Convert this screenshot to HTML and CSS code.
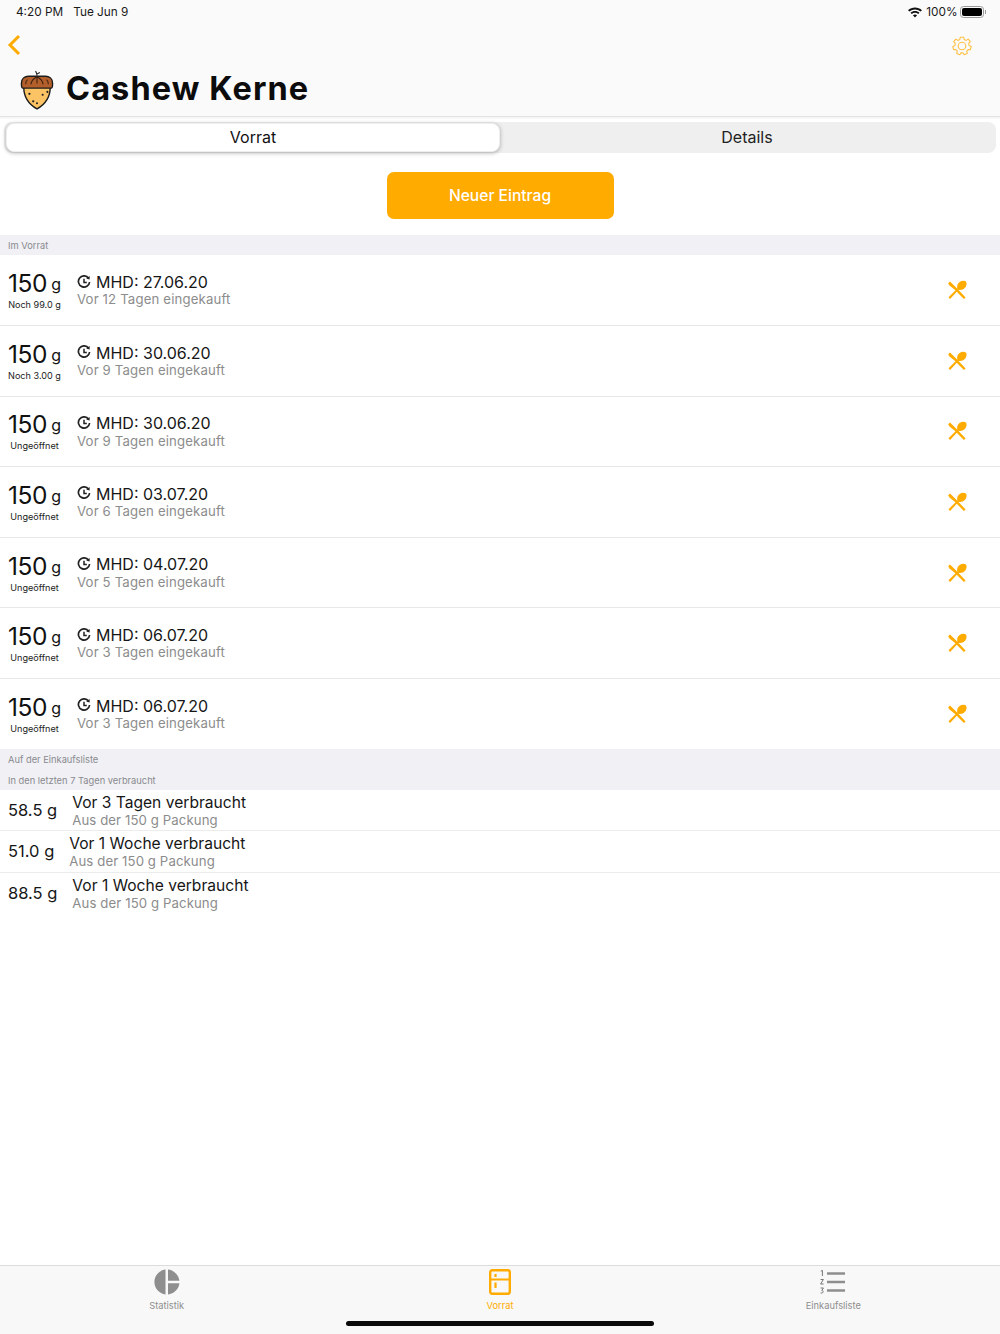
FILE: index.html
```html
<!DOCTYPE html>
<html lang="de">
<head>
<meta charset="utf-8">
<title>Cashew Kerne</title>
<link rel="stylesheet" href="styles.css">
</head>
<body>
<svg class="defs" width="0" height="0" aria-hidden="true">
  <symbol id="cutlery" viewBox="0 0 20 20">
    <path d="M1.200 3.200 3 1.400 9.600 8 18.600 17.400 16.900 19 7.800 9.800 2.400 5.600Z" fill="#ffab00"/>
    <path d="M1.500 17.300 10.400 8.600C9.600 6 10.600 3.300 12.600 1.900 14.700.5 17.600.4 18.900 1.600 20.100 3 19.600 5.800 18 7.800 16.200 9.800 13.600 10.500 11.600 9.800L3.100 19Z" fill="#ffab00"/>
  </symbol>
  <symbol id="clock" viewBox="0 0 14 14">
    <path d="M11.600 3.200A5.600 5.600 0 1 0 12.600 7" fill="none" stroke="#222" stroke-width="1.700"/>
    <path d="M9.200 3.600 12.600 4.400 12.600 1Z" fill="#222"/>
    <path d="M7 3.800V7.400H9.800" fill="none" stroke="#222" stroke-width="1.500"/>
  </symbol>
</svg>
<div class="page">
  <header class="head">
    <div class="status">
      <span class="time">4:20 PM</span><span class="date">Tue Jun 9</span>
      <span class="spacer"></span>
      <svg class="wifi" width="14" height="11" viewBox="0 0 14 11"><path d="M7 10.600 4.900 8.300C6.100 7.200 7.900 7.200 9.100 8.300Z M3.800 7.100 2.500 5.700C5 3.400 9 3.400 11.500 5.700L10.200 7.100C8.400 5.400 5.600 5.400 3.800 7.100Z M1.500 4.600 0 3.200C3.900-.5 10.100-.5 14 3.200L12.500 4.600C9.400 1.700 4.600 1.700 1.500 4.600Z" fill="#111"/></svg>
      <span class="pct">100%</span>
      <span class="battery"><span class="cell"></span></span><span class="nub"></span>
    </div>
    <div class="navrow">
      <svg class="back" width="14" height="22" viewBox="0 0 14 22"><path d="M12 2 3 11 12 20" fill="none" stroke="#ffab00" stroke-width="3"/></svg>
      <svg class="gear" width="20" height="20" viewBox="0 0 20 20"><path d="M8.300 1.200H11.700L12.200 3.500 14.200 4.400 16.200 3.100 18.300 5.700 16.700 7.400 17.100 9.500 19.200 10.500 18.400 13.600 16.100 13.500 14.700 15.200 15.300 17.400 12.200 18.800 11 16.900H9L7.800 18.800 4.700 17.400 5.300 15.200 3.900 13.500 1.600 13.600.8 10.500 2.900 9.500 3.300 7.400 1.700 5.700 3.800 3.100 5.800 4.400 7.800 3.500Z" fill="none" stroke="#ffc144" stroke-width="1.100" stroke-linejoin="round"/><circle cx="10" cy="10" r="3.800" fill="none" stroke="#ffc144" stroke-width="1.100"/></svg>
    </div>
    <div class="titlerow">
      <svg class="nut" width="34" height="42" viewBox="0 0 36 42">
        <path d="M18 6C18 4 17.500 3 16.500 1M18 4 21 2.500" fill="none" stroke="#222" stroke-width="1.200"/>
        <path d="M4 18C4 31 11 37 18 41 25 37 32 31 32 18Z" fill="#fbc364" stroke="#1c1c1c" stroke-width="1.500"/>
        <path d="M3 19C1.500 19 1.500 17 1.500 14 1.500 9 5 6.500 9 6.500H27C31 6.500 34.500 9 34.500 14 34.500 17 34.500 19 33 19Z" fill="#b25f2c" stroke="#1c1c1c" stroke-width="1.500"/>
        <path d="M18 7C14 9 12 12 11.500 15M18 7C22 9 24 12 24.500 15M18 7V14M8 10C6.500 11 6 13 6 15M28 10C29.500 11 30 13 30 15" fill="none" stroke="#3b2010" stroke-width="1.100"/>
        <circle cx="10" cy="25" r="1.200" fill="#222"/><circle cx="24" cy="26" r="1.100" fill="#222"/><circle cx="29" cy="23" r="1.100" fill="#222"/><circle cx="14" cy="33" r="1.200" fill="#222"/><circle cx="18" cy="35" r="1.100" fill="#222"/>
      </svg>
      <h1 class="title">Cashew Kerne</h1>
    </div>
  </header>
  <div class="segbar">
    <div class="segs">
      <div class="seg active">Vorrat</div>
      <div class="seg">Details</div>
    </div>
  </div>
  <div class="action"><button class="cta">Neuer Eintrag</button></div>
  <main class="content">
    <div class="sec sec-first">Im Vorrat</div>
    <ul class="stock">
      <li class="item"><div class="amt"><div class="big">150<small> g</small></div><div class="sub">Noch 99.0 g</div></div><div class="info"><div class="mhd"><svg class="clk"><use href="#clock"/></svg>MHD: 27.06.20</div><div class="grey">Vor 12 Tagen eingekauft</div></div><svg class="eat"><use href="#cutlery"/></svg></li>
      <li class="item"><div class="amt"><div class="big">150<small> g</small></div><div class="sub">Noch 3.00 g</div></div><div class="info"><div class="mhd"><svg class="clk"><use href="#clock"/></svg>MHD: 30.06.20</div><div class="grey">Vor 9 Tagen eingekauft</div></div><svg class="eat"><use href="#cutlery"/></svg></li>
      <li class="item"><div class="amt"><div class="big">150<small> g</small></div><div class="sub">Ungeöffnet</div></div><div class="info"><div class="mhd"><svg class="clk"><use href="#clock"/></svg>MHD: 30.06.20</div><div class="grey">Vor 9 Tagen eingekauft</div></div><svg class="eat"><use href="#cutlery"/></svg></li>
      <li class="item"><div class="amt"><div class="big">150<small> g</small></div><div class="sub">Ungeöffnet</div></div><div class="info"><div class="mhd"><svg class="clk"><use href="#clock"/></svg>MHD: 03.07.20</div><div class="grey">Vor 6 Tagen eingekauft</div></div><svg class="eat"><use href="#cutlery"/></svg></li>
      <li class="item"><div class="amt"><div class="big">150<small> g</small></div><div class="sub">Ungeöffnet</div></div><div class="info"><div class="mhd"><svg class="clk"><use href="#clock"/></svg>MHD: 04.07.20</div><div class="grey">Vor 5 Tagen eingekauft</div></div><svg class="eat"><use href="#cutlery"/></svg></li>
      <li class="item"><div class="amt"><div class="big">150<small> g</small></div><div class="sub">Ungeöffnet</div></div><div class="info"><div class="mhd"><svg class="clk"><use href="#clock"/></svg>MHD: 06.07.20</div><div class="grey">Vor 3 Tagen eingekauft</div></div><svg class="eat"><use href="#cutlery"/></svg></li>
      <li class="item"><div class="amt"><div class="big">150<small> g</small></div><div class="sub">Ungeöffnet</div></div><div class="info"><div class="mhd"><svg class="clk"><use href="#clock"/></svg>MHD: 06.07.20</div><div class="grey">Vor 3 Tagen eingekauft</div></div><svg class="eat"><use href="#cutlery"/></svg></li>
    </ul>
    <div class="sec">Auf der Einkaufsliste</div>
    <div class="sec">In den letzten 7 Tagen verbraucht</div>
    <ul class="used">
      <li class="urow"><div class="uamt">58.5 g</div><div class="utext"><div class="utitle">Vor 3 Tagen verbraucht</div><div class="ugrey">Aus der 150 g Packung</div></div></li>
      <li class="urow"><div class="uamt">51.0 g</div><div class="utext"><div class="utitle">Vor 1 Woche verbraucht</div><div class="ugrey">Aus der 150 g Packung</div></div></li>
      <li class="urow"><div class="uamt">88.5 g</div><div class="utext"><div class="utitle">Vor 1 Woche verbraucht</div><div class="ugrey">Aus der 150 g Packung</div></div></li>
    </ul>
  </main>
  <nav class="tabs">
    <div class="tab">
      <svg width="26" height="26" viewBox="0 0 26 26"><path d="M11.500.6V25.400C5.200 24.700.4 19.400.4 13S5.200 1.300 11.500.6Z M14 .6C19.900 1.200 24.800 5.900 25.400 11.800H14Z M14 14.200H25.400C24.800 20.100 19.900 24.800 14 25.400Z" fill="#8e8e8e"/></svg>
      <span>Statistik</span>
    </div>
    <div class="tab on">
      <svg width="22" height="26" viewBox="0 0 22 26"><rect x="1.200" y="1.200" width="19.600" height="23.600" rx="2" fill="none" stroke="#ffab00" stroke-width="2.400"/><path d="M1.500 10.500H20.500M6.500 5V8M6.500 13.500V19" stroke="#ffab00" stroke-width="2.200" fill="none"/></svg>
      <span>Vorrat</span>
    </div>
    <div class="tab">
      <svg width="26" height="26" viewBox="0 0 26 26"><path d="M7 4.500H25M7 13H25M7 21.500H25" stroke="#8e8e8e" stroke-width="2.400" fill="none"/><path d="M.8 2.200 2.400 1.400V7M.6 10.500H3.400L.6 15H3.600M.6 19H3.400L1.800 21.500C3.800 21.500 3.800 24.500.6 24" stroke="#777" stroke-width="1" fill="none"/></svg>
      <span>Einkaufsliste</span>
    </div>
    <div class="homebar"></div>
  </nav>
</div>
</body>
</html>
```
FILE: styles.css
```css
* { box-sizing: border-box; }
html, body { margin: 0; padding: 0; }
body { font-family: Inter, "Liberation Sans", sans-serif; color: #111; background: #fff; }
.defs { position: absolute; }
ul { list-style: none; margin: 0; padding: 0; }
.page { width: 1000px; height: 1334px; display: flex; flex-direction: column; overflow: hidden; }

.head { height: 117px; background: #fafafa; border-bottom: 1px solid #e2e2e2; box-shadow: 0 2px 0 #f7f7f7; flex: none; }
.status { height: 24px; display: flex; align-items: center; padding: 0 14px 0 16px; font-size: 11.800px; color: #1a1a1a; }
.date { margin-left: 10px; }
.spacer { flex: 1; }
.wifi { margin-right: 4px; }
.pct { margin-right: 2px; }
.battery { width: 24px; height: 12px; border: 1px solid #999; border-radius: 3.500px; padding: 1px; display: block; }
.cell { display: block; height: 100%; background: #000; border-radius: 2px; }
.nub { width: 1.500px; height: 4px; background: #999; margin-left: 1px; }

.navrow { height: 42px; display: flex; justify-content: space-between; align-items: center; padding: 0 28px 0 7px; }
.gear { margin-top: 2px; }
.titlerow { display: flex; align-items: center; padding: 0 0 6px 20px; gap: 12px; height: 50px; }
.nut { margin-top: 3px; }
.title { margin: 0; font-size: 32.500px; font-weight: 700; letter-spacing: 1.100px; color: #0c0c0c; padding-top: 1px; }

.segbar { padding: 5px 4px 0 4px; flex: none; }
.segs { height: 31px; background: #efefef; border-radius: 8px; display: flex; }
.seg { flex: 1; display: flex; align-items: center; justify-content: center; font-size: 16px; color: #222; padding: 0 2px 2px 0; }
.seg.active { background: #fff; border-radius: 8px; margin: 1px 0 1px 2px; border: 1px solid #eee; box-shadow: 0 1px 4px rgba(0,0,0,.3); color: #111; flex: none; width: 494px; padding: 0 0 1px; }

.action { display: flex; justify-content: center; padding: 19px 0 16px; flex: none; }
.cta { width: 227px; height: 47px; border: 0; border-radius: 7px; background: #ffab00; color: #fff; font: 500 15.600px Inter, "Liberation Sans", sans-serif; padding: 0 0 1px; }

.content { flex: 1; min-height: 0; }
.sec { height: 20.500px; background: #f0f0f5; color: #8a8a8e; font-size: 9.300px; padding: 1px 0 0 8px; display: flex; align-items: center; }
.sec-first { height: 20.400px; }

.item { height: 70.600px; display: flex; align-items: center; border-bottom: 1px solid #e8e8e8; padding: 0 33px 0 8px; }
.item:last-child { border-bottom: 0; height: 70px; }
.amt { width: 69px; flex: none; display: flex; flex-direction: column; align-items: center; padding-right: 16px; }
.big { font-size: 24.500px; letter-spacing: -.4px; line-height: 28px; white-space: nowrap; }
.big small { display: inline-block; font-size: 16px; letter-spacing: 0; margin-left: 4px; transform: translateY(-2px); }
.sub { font-size: 9.100px; line-height: 13px; margin-top: -2px; white-space: nowrap; color: #222; }
.info { flex: 1; margin-top: 1px; }
.mhd { display: flex; align-items: center; font-size: 16px; line-height: 18.500px; color: #161616; }
.clk { width: 14px; height: 14px; margin-right: 5px; margin-top: -1px; }
.grey { font-size: 13.200px; line-height: 17px; color: #8c8c8c; letter-spacing: .15px; }
.eat { width: 20px; height: 20px; flex: none; }

.urow { height: 41.300px; display: flex; align-items: center; gap: 15px; padding-left: 8px; border-bottom: 1px solid #ececec; }
.urow:last-child { border-bottom: 0; }
.uamt { font-size: 16.500px; color: #161616; white-space: nowrap; }
.utext { margin-top: 2px; }
.utitle { font-size: 15.600px; line-height: 18px; color: #161616; }
.ugrey { font-size: 13.200px; line-height: 17px; color: #8c8c8c; letter-spacing: .1px; }

.tabs { position: relative; height: 69px; flex: none; background: #f8f8f8; border-top: 1px solid #dcdcdc; display: flex; padding-top: 3px; justify-content: space-between; }
.tab { flex: 1; display: flex; flex-direction: column; align-items: center; color: #8e8e8e; font-size: 9.300px; gap: 5px; }
.tab.on { color: #ffab00; }
.homebar { position: absolute; left: 346px; bottom: 8px; width: 308px; height: 5px; border-radius: 3px; background: #0a0a0a; }
```
